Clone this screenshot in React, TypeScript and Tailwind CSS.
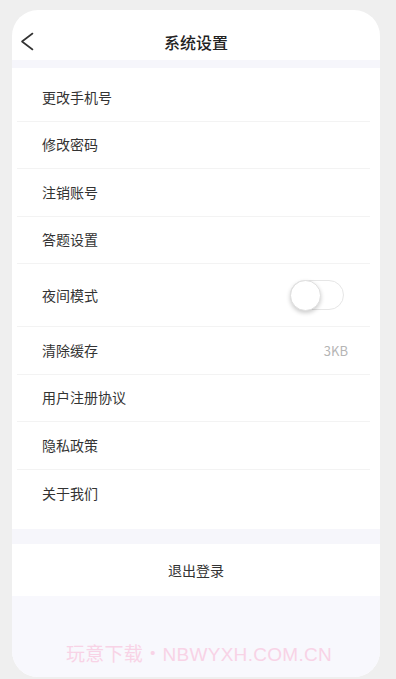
const rows = [
  { label: '更改手机号' },
  { label: '修改密码' },
  { label: '注销账号' },
  { label: '答题设置' },
  { label: '夜间模式', toggle: true },
  { label: '清除缓存', value: '3KB' },
  { label: '用户注册协议' },
  { label: '隐私政策' },
  { label: '关于我们' },
];

export default function App() {
  return (
    <div
      className="h-[679px] w-[396px] overflow-hidden bg-[#efefef] pt-[10px] pl-[12px]"
      style={{ fontFamily: '"Noto Sans CJK SC", "Noto Sans", sans-serif' }}
    >
      <div className="flex h-[667px] w-[368px] flex-col overflow-hidden rounded-[26px] bg-white">
        {/* Header */}
        <div className="relative flex h-[50px] shrink-0 items-center justify-center">
          <svg
            className="absolute left-[8px] top-[22px] h-[19px] w-[14px]"
            viewBox="0 0 14 19"
            fill="none"
            stroke="#333"
            strokeWidth={1.6}
            strokeLinecap="round"
            strokeLinejoin="round"
          >
            <path d="M12.5 1.5 2 9.5l10.5 8" />
          </svg>
          <span className="pt-[13px] text-[16px] font-medium text-[#222]">系统设置</span>
        </div>
        <div className="h-[8px] shrink-0 bg-[#f6f6fb]" />

        {/* List */}
        <div className="flex flex-col pt-[6px] pb-[12px]">
          {rows.map((row, i) => (
            <div
              key={row.label}
              className={`mr-[10px] ml-[5px] flex items-center justify-between pl-[25px] pr-[22px] ${
                row.toggle ? 'h-[63px]' : 'h-[47.5px]'
              } ${i < rows.length - 1 ? 'border-b border-[#f3f3f3]' : ''}`}
            >
              <span className="text-[14px] text-[#333]">{row.label}</span>
              {row.value && <span className="text-[13px] text-[#b5b5b5]">{row.value}</span>}
              {row.toggle && (
                <div className="relative mr-[4px] h-[30px] w-[54px] rounded-full border border-[#e6e6e6] bg-white">
                  <div className="absolute -left-[1px] -top-[1px] h-[31px] w-[31px] rounded-full border border-[#e0e0e0] bg-white shadow-[0_2px_4px_rgba(0,0,0,0.2)]" />
                </div>
              )}
            </div>
          ))}
        </div>

        <div className="h-[15px] shrink-0 bg-[#f6f6fb]" />
        <div className="flex h-[52px] shrink-0 items-center justify-center">
          <span className="text-[14px] text-[#333]">退出登录</span>
        </div>

        {/* Bottom area */}
        <div className="flex flex-1 items-end justify-center bg-[#f8f8fd] pb-[8px]">
          <span
            className="pl-[6px] text-[19px] tracking-[0.3px] text-[#f8d3e6]"
            style={{ fontFamily: '"Liberation Sans", "Noto Sans CJK SC", sans-serif' }}
          >
            玩意下载・NBWYXH.COM.CN
          </span>
        </div>
      </div>
    </div>
  );
}
